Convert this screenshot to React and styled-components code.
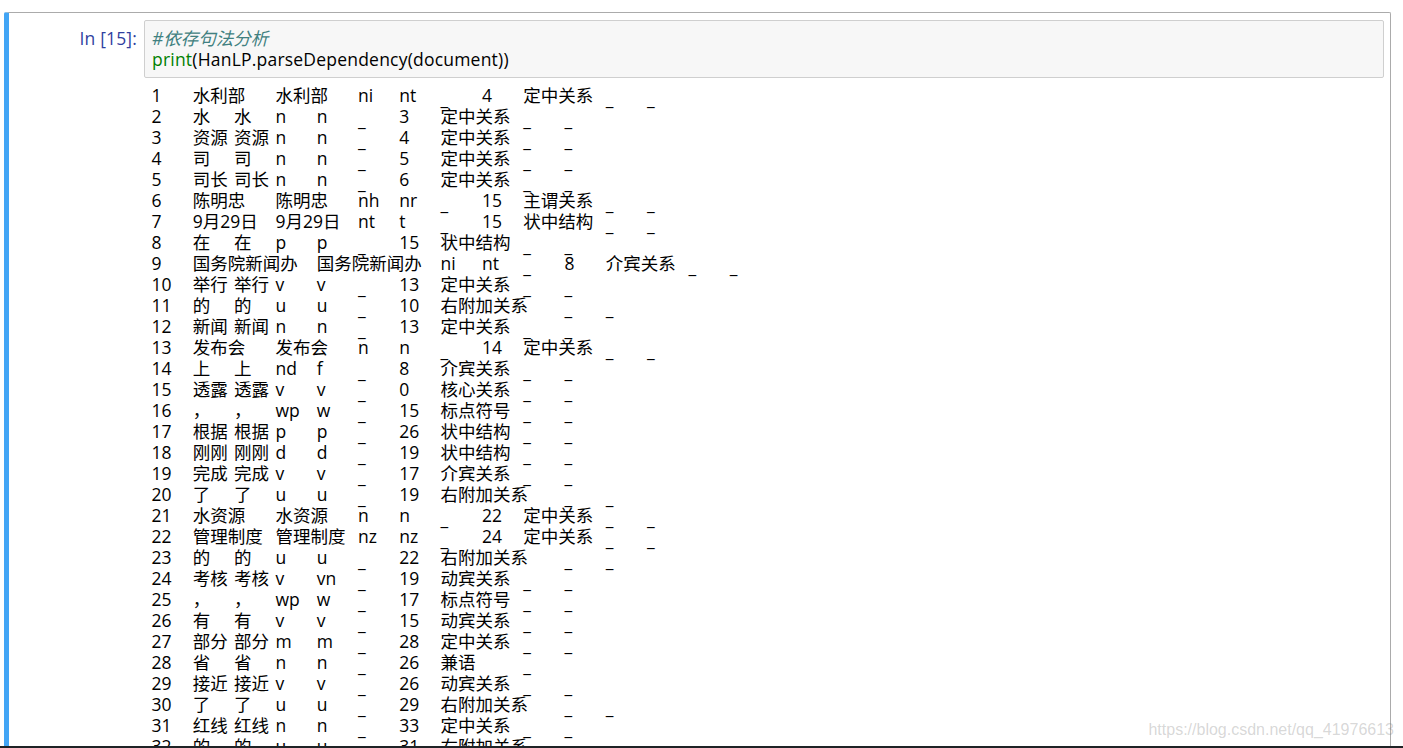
import React from 'react';
import styled, {createGlobalStyle} from 'styled-components';

const GlobalStyle = createGlobalStyle`
    html, body {
        margin: 0;
        padding: 0;
        background: #fff;
    }
`;

const fontStack = `"Open Sans", "Noto Sans CJK SC", sans-serif`;

const Page = styled.div`
    width: 1403px;
    height: 748px;
    display: flex;
    flex-direction: column;
    overflow: hidden;
    position: relative;
    font-family: ${fontStack};
    color: #000;
`;

const Cell = styled.div`
    flex: 1;
    min-height: 0;
    margin: 12px 12px 0 4px;
    border: 1px solid #ababab;
    border-left: 5px solid #42a5f5;
    border-bottom: none;
    border-radius: 2px 2px 0 0;
    padding: 7px 6px 0 0;
    overflow: hidden;
    display: grid;
    grid-template-columns: 128px 1fr;
    grid-template-rows: auto 1fr;
    column-gap: 7px;
`;

const Prompt = styled.div`
    color: #303f9f;
    font-size: 17.5px;
    letter-spacing: 0.15px;
    line-height: 21px;
    text-align: right;
    padding-top: 8px;
`;

const InputArea = styled.div`
    box-sizing: border-box;
    background: #f7f7f7;
    border: 1px solid #cfcfcf;
    border-radius: 2px;
    height: 58px;
    padding: 7px 7px 0;
    font-size: 17.5px;
    line-height: 21px;
`;

const CodeLine = styled.div`
    white-space: pre;
    letter-spacing: 0.21px;
`;

const Comment = styled.span`
    color: #408080;
    font-style: italic;
    letter-spacing: 0;
`;

const Builtin = styled.span`
    color: #008000;
`;

const Output = styled.pre`
    grid-column: 2;
    margin: 7px 0 0;
    padding-left: 7.5px;
    font-family: inherit;
    font-size: 17.5px;
    line-height: 21px;
    tab-size: 41.3px;
    white-space: pre;
`;

const Blank = styled.span`
    line-height: 0;
    vertical-align: -3px;
`;

const Watermark = styled.div`
    position: absolute;
    right: 9px;
    bottom: 9px;
    font-family: "Liberation Sans", sans-serif;
    font-size: 16px;
    color: rgba(120, 120, 120, 0.3);
`;

const BottomStrip = styled.div`
    height: 2px;
    flex: none;
    background: #1f2326;
`;

const rows = [
    '1 水利部 水利部 ni nt _ 4 定中关系 _ _',
    '2 水 水 n n _ 3 定中关系 _ _',
    '3 资源 资源 n n _ 4 定中关系 _ _',
    '4 司 司 n n _ 5 定中关系 _ _',
    '5 司长 司长 n n _ 6 定中关系 _ _',
    '6 陈明忠 陈明忠 nh nr _ 15 主谓关系 _ _',
    '7 9月29日 9月29日 nt t _ 15 状中结构 _ _',
    '8 在 在 p p _ 15 状中结构 _ _',
    '9 国务院新闻办 国务院新闻办 ni nt _ 8 介宾关系 _ _',
    '10 举行 举行 v v _ 13 定中关系 _ _',
    '11 的 的 u u _ 10 右附加关系 _ _',
    '12 新闻 新闻 n n _ 13 定中关系 _ _',
    '13 发布会 发布会 n n _ 14 定中关系 _ _',
    '14 上 上 nd f _ 8 介宾关系 _ _',
    '15 透露 透露 v v _ 0 核心关系 _ _',
    '16 ， ， wp w _ 15 标点符号 _ _',
    '17 根据 根据 p p _ 26 状中结构 _ _',
    '18 刚刚 刚刚 d d _ 19 状中结构 _ _',
    '19 完成 完成 v v _ 17 介宾关系 _ _',
    '20 了 了 u u _ 19 右附加关系 _ _',
    '21 水资源 水资源 n n _ 22 定中关系 _ _',
    '22 管理制度 管理制度 nz nz _ 24 定中关系 _ _',
    '23 的 的 u u _ 22 右附加关系 _ _',
    '24 考核 考核 v vn _ 19 动宾关系 _ _',
    '25 ， ， wp w _ 17 标点符号 _ _',
    '26 有 有 v v _ 15 动宾关系 _ _',
    '27 部分 部分 m m _ 28 定中关系 _ _',
    '28 省 省 n n _ 26 兼语  _',
    '29 接近 接近 v v _ 26 动宾关系 _ _',
    '30 了 了 u u _ 29 右附加关系 _ _',
    '31 红线 红线 n n _ 33 定中关系 _ _',
    '32 的 的 u u _ 31 右附加关系 _ _',
];

const renderRow = (row, i) => (
    <React.Fragment key={i}>
        {row.split(' ').map((field, j) => (
            <React.Fragment key={j}>
                {j > 0 ? '\t' : ''}
                {field === '_' ? <Blank>_</Blank> : field}
            </React.Fragment>
        ))}
        {'\n'}
    </React.Fragment>
);

const App = () => (
    <Page>
        <GlobalStyle/>
        <Cell>
            <Prompt>In [15]:</Prompt>
            <InputArea>
                <CodeLine><Comment>#依存句法分析</Comment></CodeLine>
                <CodeLine><Builtin>print</Builtin>(HanLP.parseDependency(document))</CodeLine>
            </InputArea>
            <Output>{rows.map(renderRow)}</Output>
        </Cell>
        <BottomStrip/>
        <Watermark>https://blog.csdn.net/qq_41976613</Watermark>
    </Page>
);

export default App;
